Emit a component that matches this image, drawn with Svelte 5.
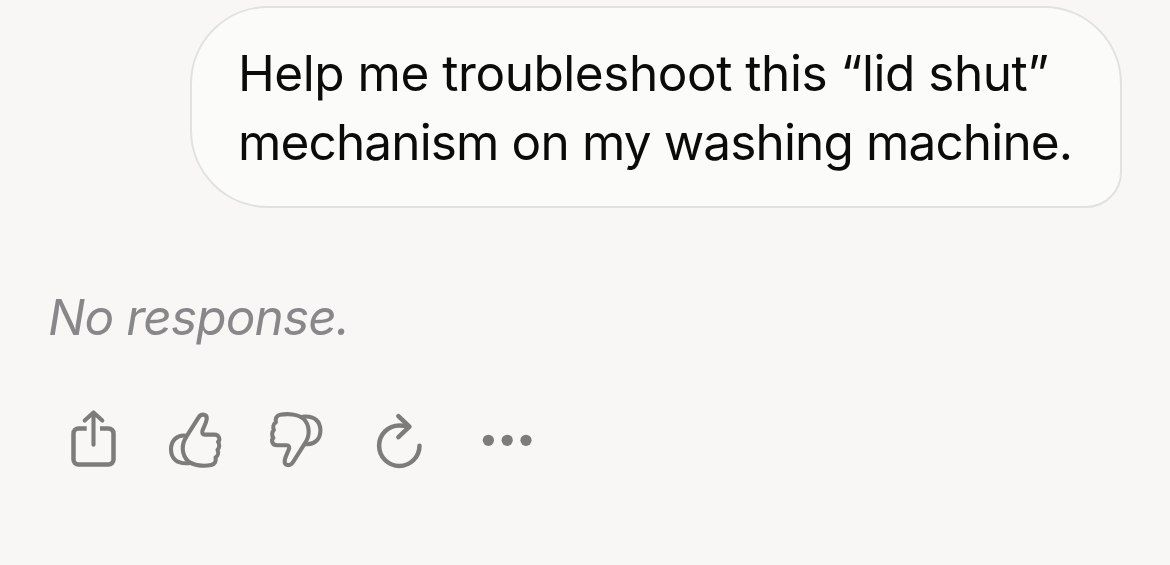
<script lang="ts">
  export let lines: string[] = ['Help me troubleshoot this “lid shut”', 'mechanism on my washing machine.'];
  export let response = 'No response.';
</script>

<main class="chat">
  <div class="message">
    {#each lines as line}
      <span class="line">{line}</span>
    {/each}
  </div>

  <p class="response">{response}</p>

  <div class="actions">
    <button class="action" aria-label="Share">
      <svg viewBox="0 0 62 64">
        <path d="M22.7 20.5H14.5a5 5 0 0 0-5 5v26a5 5 0 0 0 5 5h30a5 5 0 0 0 5-5v-26a5 5 0 0 0-5-5H36" stroke-linecap="butt" />
        <path class="thin" d="M29.5 36.8V4.7M20.7 12.5l8.8-8.1 8.8 8.1" />
      </svg>
    </button>
    <button class="action" aria-label="Good response">
      <svg class="thin" viewBox="0 0 62 64">
        <path d="M32.3 9.8C35.4 4.8 41.4 6.2 40.7 11.2C40.2 15 38 18.5 36.6 22.2C35.7 25 36.4 26.6 39 26.6H48.5C52.8 26.6 54.8 31.2 52 34C53.8 36 53.6 40 51.5 41.8C52.8 44.5 52 48 49.5 49.5C50.6 53.2 48.6 56.4 45.2 57C38 58.4 27.6 57.8 22 53.2C15.7 47 14.8 36.5 20.7 28.2Z" />
        <path d="M20 27.7C10.5 26.6 5 33 5 41.3C5 50 10.3 56.4 23 55.1" />
      </svg>
    </button>
    <button class="action" aria-label="Bad response">
      <svg class="thin" viewBox="0 0 62 64">
        <g transform="rotate(180 28.7 31.9)">
          <path d="M32.3 9.8C35.4 4.8 41.4 6.2 40.7 11.2C40.2 15 38 18.5 36.6 22.2C35.7 25 36.4 26.6 39 26.6H48.5C52.8 26.6 54.8 31.2 52 34C53.8 36 53.6 40 51.5 41.8C52.8 44.5 52 48 49.5 49.5C50.6 53.2 48.6 56.4 45.2 57C38 58.4 27.6 57.8 22 53.2C15.7 47 14.8 36.5 20.7 28.2Z" />
          <path d="M20 27.7C10.5 26.6 5 33 5 41.3C5 50 10.3 56.4 23 55.1" />
        </g>
      </svg>
    </button>
    <button class="action" aria-label="Retry">
      <svg viewBox="0 0 62 64">
        <path d="M49.5 37.7A20.2 20.2 0 1 1 29.3 17.5Q34 17.5 39 18.7" />
        <path d="M28.4 8.1L39.4 18.7L28.4 29.1" />
      </svg>
    </button>
    <button class="action" aria-label="More">
      <svg class="dots" viewBox="0 0 62 64">
        <circle cx="16.4" cy="32.3" r="5.6" />
        <circle cx="35.2" cy="32.3" r="5.6" />
        <circle cx="54" cy="32.3" r="5.6" />
      </svg>
    </button>
  </div>
</main>

<style>
  :global(body) {
    background: #f8f7f6;
  }
  .chat {
    box-sizing: border-box;
    height: 565px;
    padding: 6px 48px 0;
    display: flex;
    flex-direction: column;
    font-family: Inter, sans-serif;
    font-size: 49.5px;
    line-height: 69px;
  }
  .message {
    box-sizing: border-box;
    align-self: flex-end;
    width: 932px;
    height: 202px;
    padding: 31px 0 0 46px;
    display: flex;
    flex-direction: column;
    border: 2px solid #e1e1df;
    border-radius: 78px 78px 36px 78px;
    background: #fbfbfa;
    color: #0b0b0a;
  }
  .line {
    white-space: nowrap;
    letter-spacing: -0.46px;
  }
  .line:last-child {
    letter-spacing: -0.86px;
  }
  .response {
    margin: 75px 0 0;
    color: #88878a;
    font-style: italic;
    letter-spacing: -0.86px;
  }
  .actions {
    display: flex;
    gap: 40px;
    margin-top: 56px;
    padding-left: 16px;
  }
  .action {
    width: 62px;
    height: 64px;
    padding: 0;
    border: 0;
    background: none;
    cursor: pointer;
  }
  .action svg {
    display: block;
    width: 62px;
    height: 64px;
    fill: none;
    stroke: #7d7c7a;
    stroke-width: 4.5;
    stroke-linecap: round;
    stroke-linejoin: round;
  }
  .action .thin {
    stroke-width: 4.1;
  }
  .action .dots {
    fill: #7d7c7a;
    stroke: none;
  }
</style>
